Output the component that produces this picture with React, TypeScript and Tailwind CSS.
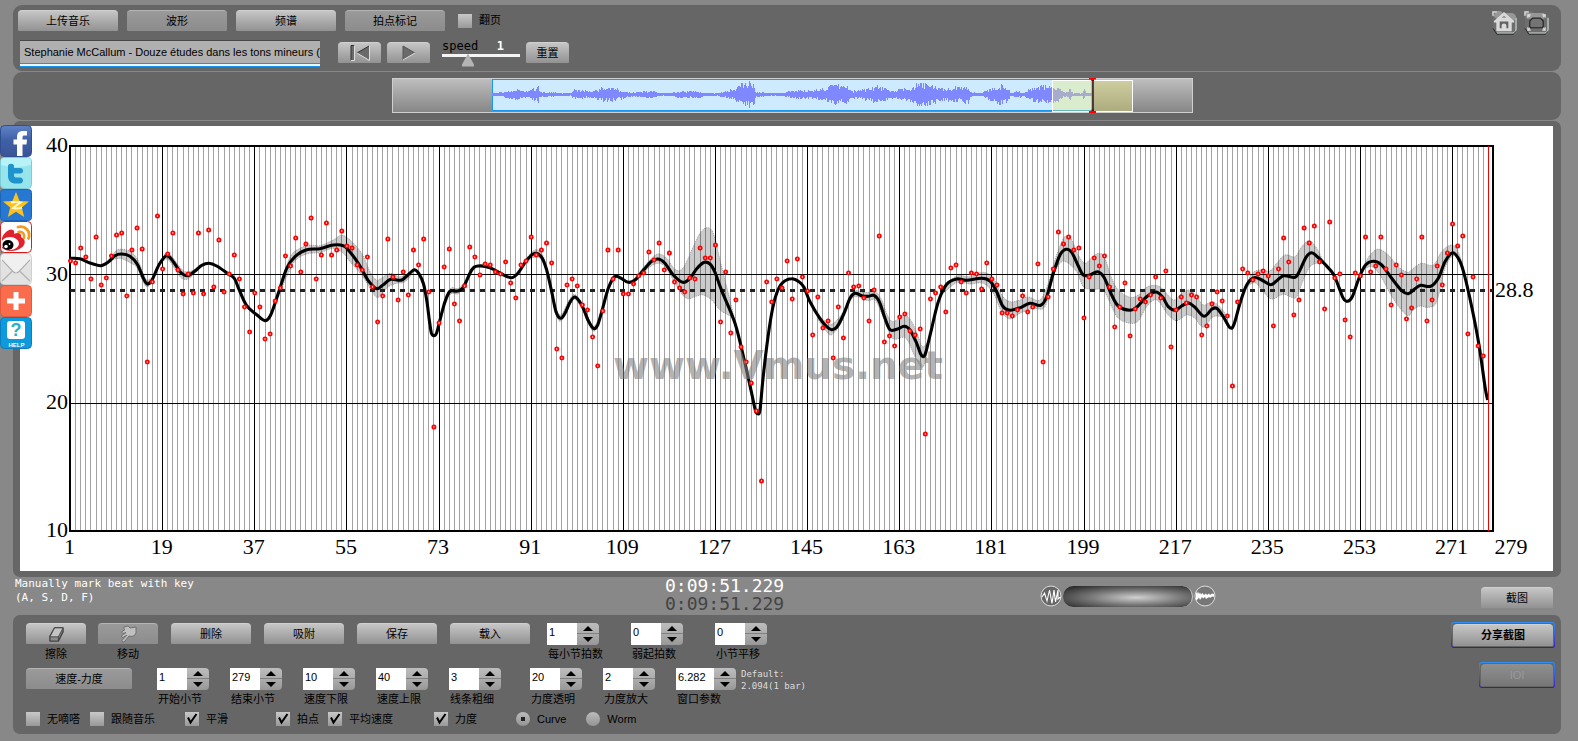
import React from "react";

type Point = [number, number];

/* ---------- chart data ---------- */

const LEFT = 50;
const RIGHT = 1473;
const TOP = 20;
const BOTTOM = 405;
const BEATS = 279;
const beatX = (beat: number) => LEFT + 0.5 + ((beat - 1) * (RIGHT - LEFT)) / (BEATS - 1);

const BEAT_LEVELS: number[] = [
  261, 263, 248, 257, 279, 237, 285, 278, 256, 235, 233, 296, 250, 228, 249, 362, 282, 216, 269, 254,
  233, 270, 294, 274, 293, 233, 294, 230, 287, 240, 292, 274, 255, 279, 307, 332, 293, 307, 339, 334,
  301, 288, 256, 266, 238, 272, 244, 218, 279, 255, 223, 255, 250, 231, 246, 248, 265, 270, 257, 287,
  322, 296, 239, 277, 300, 272, 295, 250, 265, 239, 292, 427, 323, 267, 249, 304, 321, 286, 247, 257,
  275, 264, 265, 272, 274, 262, 283, 298, 265, 261, 237, 255, 250, 243, 263, 349, 358, 285, 279, 286,
  305, 310, 337, 366, 311, 250, 279, 250, 294, 294, 284, 276, 273, 252, 260, 243, 270, 253, 282, 288,
  292, 278, 279, 248, 258, 258, 245, 322, 272, 333, 300, 347, 362, 383, 411, 481, 282, 302, 279, 288,
  261, 299, 259, 277, 291, 335, 297, 328, 321, 358, 307, 338, 273, 287, 286, 298, 321, 290, 236, 342,
  336, 346, 317, 314, 331, 335, 329, 434, 299, 293, 287, 312, 268, 265, 282, 293, 273, 274, 289, 263,
  279, 285, 313, 313, 316, 310, 296, 312, 307, 264, 362, 297, 269, 232, 244, 237, 250, 248, 318, 277,
  258, 266, 256, 287, 327, 307, 283, 336, 309, 299, 302, 295, 277, 298, 271, 347, 310, 297, 303, 295,
  297, 335, 326, 304, 292, 301, 316, 386, 302, 269, 273, 280, 274, 271, 276, 326, 269, 238, 262, 315,
  300, 228, 243, 226, 262, 309, 222, 278, 274, 320, 337, 273, 276, 237, 272, 266, 237, 269, 305, 265,
  275, 319, 308, 279, 237, 321, 300, 266, 285, 253, 224, 246, 236, 334, 277, 346, 356,
];

const section = (ox: number, oy: number, points: Point[]): Point[] =>
  points.map(([x, y]) => [ox + x / 3, oy + y / 3]);

const CURVE: Point[] = [
  ...section(-20, -16, [
    [210, 445], [240, 446], [270, 459], [302, 467], [325, 456], [345, 437], [365, 432], [390, 439], [412, 463],
    [428, 500], [441, 521], [455, 512], [478, 463], [500, 437], [520, 455], [540, 485], [562, 497], [585, 483],
    [605, 466], [627, 460], [650, 468], [680, 488], [703, 505], [717, 538], [740, 587], [770, 614], [795, 632],
    [812, 615], [835, 550], [860, 475], [885, 440], [920, 419], [960, 416], [1000, 405], [1030, 407], [1045, 420],
    [1075, 460], [1105, 512], [1130, 536], [1150, 524], [1172, 508], [1205, 510], [1230, 489],
  ]),
  ...section(380, 74, [
    [44, 209], [58, 223], [70, 250], [80, 300], [88, 360], [94, 398], [102, 407], [110, 398], [120, 360],
    [135, 305], [150, 274], [172, 273], [190, 262], [215, 210], [235, 198], [270, 203], [305, 222], [335, 233],
    [355, 218], [380, 181], [405, 160], [425, 172], [440, 210], [455, 275], [468, 335], [482, 355], [495, 340],
    [510, 307], [525, 291], [545, 315], [565, 362], [580, 385], [593, 375], [608, 325], [625, 265], [643, 231],
    [660, 233], [685, 247], [705, 240], [730, 211], [755, 184], [775, 177], [795, 190], [820, 225], [848, 247],
    [870, 235], [890, 206], [913, 187], [930, 192], [945, 217], [965, 272], [1005, 370], [1035, 490], [1055, 580],
    [1066, 630], [1073, 641], [1080, 630], [1088, 545], [1100, 440], [1115, 340], [1130, 280], [1148, 248],
    [1175, 236], [1197, 245], [1212, 262],
  ]),
  ...section(780, 74, [
    [30, 305], [60, 356], [80, 380], [95, 389], [110, 382], [130, 345], [150, 295], [165, 280], [185, 287],
    [205, 289], [222, 286], [238, 305], [255, 355], [270, 389], [290, 388], [313, 379], [330, 390], [350, 430],
    [362, 462], [370, 470], [378, 455], [395, 385], [415, 305], [440, 253], [470, 237], [500, 241], [545, 235],
    [570, 243], [590, 275], [608, 318], [630, 331], [660, 323], [690, 310], [722, 316], [740, 290], [760, 220],
    [780, 165], [798, 148], [815, 157], [835, 198], [850, 225], [870, 225], [893, 215], [912, 232], [935, 285],
    [955, 318], [990, 331], [1012, 320], [1040, 290], [1068, 276], [1088, 292], [1105, 320], [1125, 331],
    [1145, 318], [1165, 309], [1185, 322], [1212, 349], [1235, 328],
  ]),
  ...section(1160, 74, [
    [110, 325], [130, 350], [150, 383], [162, 373], [180, 310], [200, 255], [222, 233], [245, 240], [272, 254],
    [290, 242], [312, 227], [345, 232], [360, 210], [378, 172], [395, 158], [412, 170], [435, 193], [460, 222],
    [478, 265], [490, 295], [502, 304], [517, 290], [535, 240], [555, 197], [580, 184], [605, 195], [635, 235],
    [665, 272], [685, 281], [703, 268], [722, 256], [752, 259], [775, 235], [795, 185], [818, 158], [838, 180],
    [852, 220], [875, 320], [897, 435], [915, 560], [923, 600],
  ]),
];

/* Each band lists its upper edge left to right, then its lower edge left to right. */
const BANDS: [Point[], Point[]][] = [
  [
    section(-20, -16, [[325, 456], [345, 425], [362, 418], [390, 424], [412, 447], [430, 490], [441, 510], [460, 500]]),
    section(-20, -16, [[325, 458], [345, 447], [365, 446], [390, 458], [410, 472], [428, 512], [441, 530], [460, 512]]),
  ],
  [
    section(-20, -16, [[480, 455], [500, 428], [520, 445], [545, 478], [562, 486], [585, 478], [600, 468]]),
    section(-20, -16, [[480, 462], [500, 447], [515, 462], [540, 500], [562, 508], [585, 490], [600, 474]]),
  ],
  [
    section(-20, -16, [[835, 540], [870, 442], [900, 415], [930, 405], [960, 407], [1000, 390], [1025, 376], [1050, 390], [1085, 430], [1110, 485], [1130, 510], [1150, 500], [1172, 490], [1205, 500], [1245, 475]]),
    section(-20, -16, [[835, 560], [880, 460], [920, 432], [960, 428], [1000, 415], [1030, 430], [1050, 455], [1085, 495], [1110, 535], [1130, 562], [1145, 552], [1165, 530], [1190, 520], [1215, 515], [1245, 482]]),
  ],
  [
    section(380, 74, [[130, 310], [152, 265], [175, 265], [200, 240]]),
    section(380, 74, [[130, 325], [152, 282], [175, 281], [200, 250]]),
  ],
  [
    section(380, 74, [[380, 175], [392, 160], [408, 149], [425, 160], [442, 205]]),
    section(380, 74, [[380, 185], [392, 178], [408, 170], [425, 180], [442, 222]]),
  ],
  [
    section(380, 74, [[465, 315], [482, 345], [510, 296], [525, 284], [545, 308], [580, 378], [605, 330]]),
    section(380, 74, [[465, 335], [482, 364], [510, 315], [525, 298], [545, 325], [580, 394], [605, 345]]),
  ],
  [
    section(380, 74, [[700, 240], [745, 185], [773, 162], [800, 175], [820, 203], [837, 212], [855, 195], [880, 140], [900, 100], [920, 83], [940, 100], [960, 180], [985, 280], [1002, 352]]),
    section(380, 74, [[700, 250], [745, 205], [773, 190], [795, 200], [820, 240], [845, 282], [865, 296], [890, 288], [910, 285], [935, 300], [960, 330], [985, 345], [995, 352], [1002, 360]]),
  ],
  [
    section(780, 74, [[55, 345], [80, 368], [95, 373], [120, 350], [135, 325]]),
    section(780, 74, [[55, 360], [80, 395], [95, 404], [120, 375], [135, 340]]),
  ],
  [
    section(780, 74, [[150, 285], [165, 272], [185, 276], [205, 277], [225, 273], [245, 300], [262, 345], [280, 365], [312, 345], [335, 365], [355, 410], [367, 440], [380, 430]]),
    section(780, 74, [[150, 300], [165, 290], [185, 294], [205, 302], [225, 300], [245, 340], [262, 385], [280, 417], [310, 412], [325, 425], [345, 470], [367, 502], [380, 470]]),
  ],
  [
    section(780, 74, [[430, 260], [470, 228], [510, 230], [550, 217], [580, 235], [605, 285], [630, 305], [660, 300], [685, 291], [720, 300], [745, 250], [765, 180], [785, 125], [798, 108], [815, 120], [835, 165], [855, 190], [880, 168], [900, 160], [915, 175], [935, 235], [955, 270], [990, 292], [1015, 285], [1040, 262], [1065, 256], [1085, 265], [1110, 292], [1125, 300], [1145, 280], [1165, 270], [1185, 282], [1210, 315], [1240, 305], [1275, 338]]),
    section(780, 74, [[430, 280], [470, 248], [510, 252], [550, 250], [580, 280], [605, 335], [630, 357], [660, 340], [700, 325], [735, 320], [760, 230], [780, 190], [800, 187], [830, 215], [850, 260], [880, 268], [910, 270], [935, 320], [955, 355], [990, 370], [1015, 362], [1040, 320], [1070, 300], [1105, 345], [1130, 362], [1160, 345], [1185, 355], [1210, 382], [1240, 350], [1275, 352]]),
  ],
  [
    section(1160, 74, [[200, 250], [215, 222], [235, 210], [270, 212], [290, 190], [315, 165], [345, 170], [365, 140], [388, 122], [410, 145], [430, 185]]),
    section(1160, 74, [[200, 262], [225, 248], [250, 275], [275, 297], [310, 283], [335, 292], [350, 290], [370, 240], [390, 200], [415, 188], [430, 192]]),
  ],
  [
    section(1160, 74, [[540, 225], [560, 180], [580, 155], [598, 148], [625, 165], [655, 200], [683, 217], [700, 205], [725, 190], [760, 195], [785, 155], [815, 135], [835, 155], [852, 215]]),
    section(1160, 74, [[540, 235], [550, 212], [575, 200], [600, 225], [630, 280], [660, 325], [685, 347], [700, 330], [720, 318], [745, 322], [770, 305], [795, 205], [818, 168], [835, 182], [852, 225]]),
  ],
];

function smooth(points: Point[]): string {
  let d = "";
  for (let i = 0; i < points.length - 1; i++) {
    const p0 = points[i - 1] ?? points[i];
    const p1 = points[i];
    const p2 = points[i + 1];
    const p3 = points[i + 2] ?? p2;
    const c = [
      p1[0] + (p2[0] - p0[0]) / 6,
      p1[1] + (p2[1] - p0[1]) / 6,
      p2[0] - (p3[0] - p1[0]) / 6,
      p2[1] - (p3[1] - p1[1]) / 6,
      p2[0],
      p2[1],
    ].map((n) => n.toFixed(1));
    d += `C${c.join(" ")}`;
  }
  return d;
}

const curvePath = `M${CURVE[0].join(" ")}${smooth(CURVE)}`;
const bandPath = ([upper, lower]: [Point[], Point[]]) => {
  const back = [...lower].reverse();
  return `M${upper[0].join(" ")}${smooth(upper)}L${back[0].join(" ")}${smooth(back)}Z`;
};

const MAJOR_BEATS = [1, 19, 37, 55, 73, 91, 109, 127, 145, 163, 181, 199, 217, 235, 253, 271];

function TempoChart() {
  return (
    <svg viewBox="0 0 1533 445" className="block w-full bg-white" role="img" aria-label="Tempo curve">
      <g stroke="#a2a2a2" shapeRendering="crispEdges">
        {Array.from({ length: BEATS - 2 }, (_, i) => (
          <line key={i} x1={beatX(i + 1)} x2={beatX(i + 1)} y1={TOP} y2={BOTTOM} />
        ))}
      </g>
      <g fill="#000" fillOpacity="0.2" stroke="#777" strokeOpacity="0.7" strokeDasharray="1 1">
        {BANDS.map((band, i) => (
          <path key={i} d={bandPath(band)} />
        ))}
      </g>
      <g stroke="#000" shapeRendering="crispEdges">
        {MAJOR_BEATS.map((beat) => (
          <line key={beat} x1={beatX(beat)} x2={beatX(beat)} y1={TOP} y2={BOTTOM} />
        ))}
        <line x1={LEFT} x2={RIGHT} y1="148.5" y2="148.5" />
        <line x1={LEFT} x2={RIGHT} y1="277.5" y2="277.5" />
        <rect x={LEFT} y={TOP} width={RIGHT - LEFT} height={BOTTOM - TOP} fill="none" strokeWidth="2" />
      </g>
      <line x1={LEFT} x2={RIGHT} y1="164.5" y2="164.5" stroke="#222" strokeWidth="3" strokeDasharray="5 5" />
      <path d={curvePath} fill="none" stroke="#000" strokeWidth="3.1" strokeLinejoin="round" />
      <g fill="#fff" stroke="#f00" strokeWidth="1.8">
        {BEAT_LEVELS.map((y, i) => (
          <circle key={i} cx={beatX(i + 1)} cy={y - 126} r="1.6" />
        ))}
      </g>
      <line x1="1468.5" x2="1468.5" y1={TOP} y2={BOTTOM} stroke="#f00" shapeRendering="crispEdges" />
      <text x="758" y="253" textAnchor="middle" fill="#808080" fillOpacity="0.62" className="font-['DejaVu_Sans',sans-serif] text-[39px] font-bold">
        www.Vmus.net
      </text>
      <g className="font-['Liberation_Serif',serif] text-[22px]" fill="#000">
        <g textAnchor="end">
          <text x="48" y="26">40</text>
          <text x="48" y="155">30</text>
          <text x="48" y="283">20</text>
          <text x="48" y="411">10</text>
        </g>
        <g textAnchor="middle">
          {MAJOR_BEATS.map((beat) => (
            <text key={beat} x={beatX(beat) - 1} y="428">{beat}</text>
          ))}
          <text x="1491" y="428">279</text>
        </g>
        <text x="1475" y="171">28.8</text>
      </g>
    </svg>
  );
}

/* ---------- overview wave form ---------- */

const ENVELOPE: Point[] = [
  [0, 1], [12, 2], [19, 4], [26, 5], [33, 3], [38, 4], [46, 7], [48, 2], [55, 2], [68, 1], [78, 1], [83, 5],
  [94, 3], [99, 3], [105, 5], [113, 7], [121, 6], [129, 4], [136, 2], [147, 2], [152, 3], [161, 3], [166, 1],
  [179, 1], [184, 3], [195, 3], [205, 3], [216, 1], [227, 1], [232, 3], [242, 5], [248, 9], [253, 12], [258, 12],
  [262, 8], [264, 2], [280, 1], [290, 1], [298, 3], [311, 4], [319, 3], [327, 5], [338, 8], [348, 9], [355, 8],
  [359, 3], [367, 4], [375, 6], [385, 8], [391, 6], [399, 3], [407, 5], [417, 6], [425, 10], [433, 10], [444, 8],
  [449, 5], [457, 6], [465, 7], [476, 8], [478, 2], [489, 1], [497, 5], [507, 9], [516, 7], [518, 1], [526, 3],
  [531, 1], [536, 4], [544, 8], [555, 8], [565, 7], [572, 2], [576, 3], [578, 5], [581, 1], [589, 1], [592, 5],
  [594, 1], [600, 1],
];

function envelopeAt(x: number): number {
  const k = Math.max(1, ENVELOPE.findIndex(([px]) => px >= x));
  const [x0, y0] = ENVELOPE[k - 1];
  const [x1, y1] = ENVELOPE[k];
  return y0 + ((y1 - y0) * (x - x0)) / (x1 - x0);
}

/* Repeatable noise in 0..1 */
const noise = (n: number) => {
  const v = Math.sin(n * 12.9898 + 4.1) * 43758.5453;
  return v - Math.floor(v);
};

const wavePath = Array.from({ length: 600 }, (_, x) => {
  const top = envelopeAt(x) * (0.45 + 0.7 * noise(x));
  const low = envelopeAt(x) * (0.45 + 0.7 * noise(x + 1000));
  return `M${x + 100.5} ${Math.round(16 - top)}V${Math.round(17 + low)}`;
}).join("");

function Overview() {
  return (
    <svg viewBox="0 0 801 35" className="block h-[35px] w-[801px]" role="img" aria-label="Overview">
      <defs>
        <linearGradient id="track" x1="0" y1="0" x2="0" y2="1">
          <stop offset="0" stopColor="#bebebe" />
          <stop offset="1" stopColor="#868686" />
        </linearGradient>
      </defs>
      <rect x="0.5" y="0.5" width="800" height="34" fill="url(#track)" stroke="#cfcfcf" />
      <rect x="100.5" y="1.5" width="600" height="31" fill="#cdeaff" stroke="#1896f0" />
      <path d={wavePath} stroke="#8088ff" />
      <rect x="660.5" y="2.5" width="80" height="31" fill="#f0f070" fillOpacity="0.35" stroke="#fff" />
      <path d="M697 0.5H704M697 34H704M699 2H702M699 32.5H702" stroke="#f00" strokeWidth="2" />
      <path d="M699.5 2V33" stroke="#e66" strokeOpacity="0.5" />
      <path d="M701 2V33" stroke="#400" strokeWidth="1.4" />
    </svg>
  );
}

/* ---------- controls ---------- */

const SILVER =
  "flex h-[21px] items-center justify-center rounded-t-[4px] rounded-b-[1px] bg-linear-to-b from-[#c6c6c6] to-[#929292] border-t border-[#d0d0d0] text-[11px] leading-none text-black";
const PRESSED =
  "flex h-[21px] items-center justify-center rounded-t-[4px] rounded-b-[1px] bg-linear-to-b from-[#9a9a9a] to-[#8c8c8c] border-t border-[#b4b4b4] text-[11px] leading-none text-black";

function Check({ id, label, checked = false }: { id: string; label: string; checked?: boolean }) {
  return (
    <span className="flex items-center gap-[7px]">
      <span className="grid">
        <input
          id={id}
          type="checkbox"
          defaultChecked={checked}
          className="peer col-start-1 row-start-1 size-[14px] appearance-none bg-linear-to-b from-[#c8c8c8] to-[#999999]"
        />
        <svg viewBox="0 0 14 14" className="pointer-events-none invisible col-start-1 row-start-1 size-[14px] peer-checked:visible" aria-hidden="true">
          <path d="M3 5.5L5.500 10.500L11.500 2" fill="none" stroke="#000" strokeWidth="2" />
        </svg>
      </span>
      <label htmlFor={id}>{label}</label>
    </span>
  );
}

function Radio({ id, label, checked = false }: { id: string; label: string; checked?: boolean }) {
  return (
    <span className="flex items-center gap-[7px]">
      <span className="grid place-items-center">
        <input
          id={id}
          type="radio"
          name="view"
          defaultChecked={checked}
          className="peer col-start-1 row-start-1 size-[14px] appearance-none rounded-full bg-linear-to-b from-[#bcbcbc] to-[#949494]"
        />
        <span className="pointer-events-none invisible col-start-1 row-start-1 size-[4px] bg-[#222] peer-checked:visible" />
      </span>
      <label htmlFor={id}>{label}</label>
    </span>
  );
}

function Spinner({ id, label, value, wide = false }: { id: string; label: string; value: string; wide?: boolean }) {
  return (
    <div className="flex flex-col items-start">
      <div className="flex h-[22px]">
        <input
          id={id}
          defaultValue={value}
          className={`${wide ? "w-[38px]" : "w-[30px]"} h-[22px] bg-white px-[2px] pb-[5px] text-[11px] text-black outline-none`}
        />
        <span className="flex w-[22px] flex-col overflow-hidden rounded-r-[4px]">
          <button type="button" aria-label={`${label} +`} className="flex h-[11px] items-center justify-center border-b border-[#808080] bg-linear-to-b from-[#bdbdbd] to-[#adadad]">
            <svg viewBox="0 0 10 5" className="h-[5px] w-[10px] shrink-0"><path d="M0 5L5 0L10 5Z" /></svg>
          </button>
          <button type="button" aria-label={`${label} -`} className="flex h-[11px] items-center justify-center bg-linear-to-b from-[#acacac] to-[#989898]">
            <svg viewBox="0 0 10 5" className="h-[5px] w-[10px] shrink-0"><path d="M0 0L5 5L10 0Z" /></svg>
          </button>
        </span>
      </div>
      <label htmlFor={id} className="mt-[2px] pl-px text-[11px] leading-[14px] whitespace-nowrap">{label}</label>
    </div>
  );
}

/* ---------- share bar ---------- */

function ShareBar() {
  return (
    <nav aria-label="Share" className="absolute top-[125px] left-0 flex w-[32px] flex-col">
      <a href="#facebook" aria-label="Facebook">
        <svg viewBox="0 0 32 32" className="block size-[32px]">
          <defs>
            <linearGradient id="fb" x1="0" y1="0" x2="0" y2="1"><stop offset="0" stopColor="#5f83c6" /><stop offset="0.5" stopColor="#3f5fa5" /><stop offset="1" stopColor="#3a5596" /></linearGradient>
          </defs>
          <rect x="0.5" y="0.5" width="31" height="31" rx="4" fill="url(#fb)" stroke="#2f4f92" />
          <path d="M17 31V19.500H13.500V14.500H17V12C17 8 19 6 23 6H27V10.500H24.500C23 10.500 22.500 11 22.500 12.800V14.500H27L26.500 19.500H22.500V31Z" fill="#fff" />
        </svg>
      </a>
      <a href="#twitter" aria-label="Twitter">
        <svg viewBox="0 0 32 32" className="block size-[32px]">
          <rect x="0.5" y="0.5" width="31" height="31" rx="4" fill="#97e5ec" stroke="#7ccdd8" />
          <path d="M1 4Q1 1 4 1H28Q31 1 31 4V8Q16 12 1 8Z" fill="#b7f3f6" />
          <path d="M8 9C8 6 14 6 14 9V11H20C24 11 24 16.500 20 16.500H14V18C14 20 15 20.500 16.500 20.500H20C24 20.500 24 26.500 20 26.500H16C11 26.500 8 24 8 19Z" fill="#1f93cc" />
        </svg>
      </a>
      <a href="#qzone" aria-label="Qzone">
        <svg viewBox="0 0 32 32" className="block size-[32px]">
          <rect x="0.500" y="0.500" width="31" height="31" rx="3" fill="#2678d2" stroke="#1c64b8" />
          <path d="M16 3L19.600 12L29 12.600L21.800 18.600L24.200 28L16 22.800L7.800 28L10.200 18.600L3 12.600L12.400 12Z" fill="#ffc219" />
          <path d="M11 13.500C14 12.800 17 12.800 20.500 13.500L13 19C16 19.800 19 19.600 22 18.500" fill="none" stroke="#fff6c8" strokeWidth="2" />
        </svg>
      </a>
      <a href="#weibo" aria-label="Weibo">
        <svg viewBox="0 0 32 32" className="block size-[32px]">
          <rect x="0.500" y="0.500" width="31" height="31" rx="4" fill="#fff" stroke="#d01f1f" />
          <path d="M2 17C4 11 10 7 13 9C15 10.500 14 13 14 13C18 11 22 12 21 16C26 18 26 24 21 27C16 31 6 31 2 27Z" fill="#e0222e" />
          <ellipse cx="10" cy="22.500" rx="9" ry="6.500" fill="#fff" />
          <ellipse cx="8" cy="24" rx="5.500" ry="5" fill="#000" />
          <circle cx="6" cy="25.500" r="1.800" fill="#fff" />
          <circle cx="9.500" cy="23" r="0.900" fill="#fff" />
          <path d="M18.500 11C22.500 10 25 13 24 17" fill="none" stroke="#f59a1c" strokeWidth="2.500" strokeLinecap="round" />
          <path d="M18 6C25 4 31 10 28.500 17.500" fill="none" stroke="#f59a1c" strokeWidth="2.800" strokeLinecap="round" />
        </svg>
      </a>
      <a href="#mail" aria-label="Mail">
        <svg viewBox="0 0 32 32" className="block size-[32px]">
          <rect x="0.500" y="0.500" width="31" height="31" rx="4" fill="#f0f0f0" stroke="#cfcfcf" />
          <path d="M1 8L16 21L31 8V27Q31 31 27 31H5Q1 31 1 27Z" fill="#e2e2e2" />
          <path d="M2 7L13 18.500Q16 21.500 19 18.500L30 7M2 28L12.500 18M30 28L19.500 18" fill="none" stroke="#b0b0b0" strokeWidth="1.100" />
        </svg>
      </a>
      <a href="#more" aria-label="More">
        <svg viewBox="0 0 32 32" className="block size-[32px]">
          <rect x="0.500" y="0.500" width="31" height="31" rx="4" fill="#fa6c4c" stroke="#e2593b" />
          <path d="M16 7V25M7 16H25" stroke="#fff" strokeWidth="5" />
        </svg>
      </a>
      <a href="#help" aria-label="Help">
        <svg viewBox="0 0 32 32" className="block size-[32px]">
          <rect x="0.500" y="0.500" width="31" height="31" rx="4" fill="#0f9ade" stroke="#0a7dbd" />
          <rect x="7" y="4" width="18" height="18" rx="3" fill="#fff" />
          <text x="16" y="19" textAnchor="middle" fill="#23b3c6" className="font-['Liberation_Sans',sans-serif] text-[18px] font-bold">?</text>
          <text x="16.500" y="30" textAnchor="middle" fill="#fff" className="font-['Liberation_Sans',sans-serif] text-[6px] font-bold">HELP</text>
        </svg>
      </a>
    </nav>
  );
}

/* ---------- panels ---------- */

function TopPanel() {
  return (
    <header className="flex h-[66px] items-start justify-between rounded-[9px] bg-[#666] pt-[5px] pr-[12px] pl-[5px]">
      <div className="flex flex-col">
        <div className="flex items-center gap-[9px]">
          <button type="button" className={`${SILVER} w-[100px]`}>上传音乐</button>
          <button type="button" className={`${PRESSED} w-[100px]`}>波形</button>
          <button type="button" className={`${SILVER} w-[100px]`}>频谱</button>
          <button type="button" className={`${PRESSED} w-[100px]`}>拍点标记</button>
          <span className="ml-[4px] text-[11px]"><Check id="page" label="翻页" /></span>
        </div>
        <div className="mt-[9px] flex items-start pl-[2px]">
          <div className="h-[27px] w-[300px] border-t border-[#484848] bg-[#b0b0b0]">
            <input
              aria-label="Title"
              defaultValue="Stephanie McCallum - Douze études dans les tons mineurs ("
              className="block h-[22px] w-full pl-[4px] text-[11px] text-black outline-none"
            />
            <div className="h-[4px] border-y border-[#1893ee] bg-[#e8f6ff]" />
          </div>
          <button type="button" aria-label="Rewind" className={`${SILVER} mt-[2px] ml-[18px] w-[43px]`}>
            <svg viewBox="0 0 22 18" className="h-[18px] w-[22px]">
              <path d="M2 1.500H5V16.500H2ZM20 2V16L8 9Z" fill="#6a6a6a" />
              <path d="M2 16.500V1.500H5.500M8 9L20 2" fill="none" stroke="#333" />
              <path d="M5.500 1.500V16.500H2M8 9L20.500 16.500V2" fill="none" stroke="#ddd" />
            </svg>
          </button>
          <button type="button" aria-label="Play" className={`${SILVER} mt-[2px] ml-[6px] w-[43px]`}>
            <svg viewBox="0 0 14 18" className="h-[18px] w-[14px]">
              <path d="M1 2L13 9L1 16Z" fill="#6a6a6a" />
              <path d="M1 16V2L13 9" fill="none" stroke="#555" />
              <path d="M1 16L13 9" stroke="#ddd" />
            </svg>
          </button>
          <div className="ml-[12px] grid w-[78px] font-['DejaVu_Sans_Mono',monospace] text-[12px] leading-[14px]">
            <div className="-mt-px flex justify-between pr-[16px]">
              <label htmlFor="speed">speed</label>
              <output htmlFor="speed" className="font-bold text-white">1</output>
            </div>
            <input
              id="speed"
              type="range"
              min="0"
              max="3.3"
              step="0.5"
              defaultValue="1"
              className="h-[14px] w-full appearance-none bg-[linear-gradient(#f4f4f4,#f4f4f4)] bg-[length:100%_3px] bg-[position:0_1px] bg-no-repeat outline-none [&::-webkit-slider-thumb]:h-[13px] [&::-webkit-slider-thumb]:w-[12px] [&::-webkit-slider-thumb]:appearance-none [&::-webkit-slider-thumb]:bg-[#b4b4b4] [&::-webkit-slider-thumb]:[clip-path:polygon(50%_0,100%_85%,100%_100%,0_100%,0_85%)]"
            />
          </div>
          <button type="button" className={`${SILVER} mt-[2px] ml-[6px] w-[43px]`}>重置</button>
        </div>
      </div>
      <div className="flex gap-[7px]">
        <a href="#home" aria-label="Home">
          <svg viewBox="0 0 26 26" className="block size-[25px]">
            <path d="M5 1H9L11 3H21Q25 4 25 8V20Q25 24 21 24H6L1 19V6Z" fill="#6e6e6e" />
            <path d="M5 1H9L11 3H21Q25 4 25 8V10L20 12L5 9L1 6Z" fill="#979797" />
            <path d="M1 6V2H5" fill="none" stroke="#dcdcdc" strokeWidth="1.500" />
            <path d="M25 8V20Q25 24 21 24H5" fill="none" stroke="#b0b4b2" strokeWidth="1.800" />
            <path d="M1 19L5 25.200H22L25.500 22" fill="none" stroke="#222c28" />
            <path d="M12.500 2L23 11.500V13H20.500V22H4.500V13H2V11.500Z" fill="#dadada" />
            <path d="M8 12H17V19H15V16Q15 14 12.500 14Q10 14 10 16V19H8Z" fill="#626262" />
            <path d="M10 8L12.500 6L15 8Z" fill="#888" />
          </svg>
        </a>
        <a href="#fullscreen" aria-label="Full screen">
          <svg viewBox="0 0 26 26" className="block size-[25px]">
            <path d="M5 1H9L11 3H21Q25 4 25 8V20Q25 24 21 24H6L1 19V6Z" fill="#6e6e6e" />
            <path d="M1 3H17L21 3V9H3Z" fill="#979797" />
            <path d="M1 6V2H5" fill="none" stroke="#dcdcdc" strokeWidth="1.500" />
            <path d="M25 8V20Q25 24 21 24H5" fill="none" stroke="#b0b4b2" strokeWidth="1.800" />
            <path d="M1 19L5 25.200H22L25.500 22" fill="none" stroke="#222c28" />
            <path d="M9 8.500H17L20 11.500V17L18.500 18.500H7L6 17V11.500Z" fill="#747474" stroke="#222" strokeWidth="1.200" />
            <path d="M4 8V5H7M4 5L6 7M19 5H22V8M22 5L20 7M4 18V21H7M4 21L6 19M19 21H22V18M22 21L20 19" fill="none" stroke="#e0e0e0" strokeWidth="1.200" />
          </svg>
        </a>
      </div>
    </header>
  );
}

function StatusStrip() {
  return (
    <div className="flex h-[38px] items-start pr-[8px] pl-[2px]">
      <p className="w-[650px] font-['DejaVu_Sans_Mono',monospace] text-[11px] leading-[14px] text-white">
        Manually mark beat with key
        <br />
        (A, S, D, F)
      </p>
      <div className="w-[375px] font-['DejaVu_Sans_Mono',monospace] text-[18px] leading-[18px]">
        <div className="text-white">0:09:51.229</div>
        <div className="text-[#444]">0:09:51.229</div>
      </div>
      <div className="mt-[8px] flex items-center">
        <svg viewBox="0 0 22 22" className="size-[22px]" aria-hidden="true">
          <circle cx="11" cy="11" r="10" fill="#666" stroke="#ddd" />
          <path d="M2 12L4.500 8L7 16L9.500 5L12 18.500L14 5L15.500 17L18 5V14L20.500 12" fill="none" stroke="#fff" strokeWidth="1.100" />
        </svg>
        <input
          type="range"
          aria-label="Volume"
          className="mx-px h-[21px] w-[130px] appearance-none rounded-full border-r border-[#ccc] bg-[radial-gradient(ellipse_at_57%_55%,#d0d0d0,#777_45%,#222_95%)] [&::-webkit-slider-thumb]:opacity-0"
        />
        <svg viewBox="0 0 22 22" className="size-[22px]" aria-hidden="true">
          <circle cx="11" cy="11" r="10" fill="#777" stroke="#ddd" />
          <path d="M2 6L3 9L4 6.500L5 9L6 7.500L7 9.500L8.500 8L10 10L12 8.500L13 10L15 8.500L16 10L18 8.500L20 9V12L18 11.500L16 13L15 12L12 14L11 12L9 13.500L8 12L6 15L5 12.500L4 14L2 15.500Z" fill="#fff" />
        </svg>
      </div>
      <button type="button" className={`${SILVER} mt-[10px] ml-auto w-[72px]`}>截图</button>
    </div>
  );
}

function ControlPanel() {
  return (
    <section className="flex h-[119px] justify-between rounded-[7px] bg-[#666] pr-[6px] pl-[13px] text-[11px]">
      <div className="flex flex-col pt-[8px]">
        <div className="flex h-[45px] items-start">
          <div className="flex gap-[12px]">
            <div className="flex flex-col items-center">
              <button type="button" aria-labelledby="erase" className={`${SILVER} w-[60px]`}>
                <svg viewBox="0 0 18 18" className="size-[17px]">
                  <path d="M7 2H16V6L11 16H2V11Z" fill="#8c8c8c" stroke="#444" strokeWidth="1.400" strokeLinejoin="round" />
                  <path d="M7 2H16L11 11.500H2Z" fill="#c4c4c4" stroke="#444" strokeLinejoin="round" />
                  <path d="M11 11.500V16" stroke="#444" />
                </svg>
              </button>
              <span id="erase" className="mt-[3px] leading-[14px]">擦除</span>
            </div>
            <div className="flex flex-col items-center">
              <button type="button" aria-labelledby="move" className={`${PRESSED} w-[60px]`}>
                <svg viewBox="0 0 18 18" className="size-[18px]">
                  <path d="M5 2L9 1L11 3L17 2V8Q16 11 13 11.500L10 11L5 17Q3 17.500 3 15.500L8 10L4 12.500Q2 12.500 2.500 11L7 7.500L4 8.500Q2 8 3 6.500L6 4.500Q4 4 5 2Z" fill="#c0c0c0" stroke="#6a6a6a" strokeWidth="0.900" strokeLinejoin="round" />
                </svg>
              </button>
              <span id="move" className="mt-[3px] leading-[14px]">移动</span>
            </div>
          </div>
          <div className="ml-[13px] flex gap-[13px]">
            <button type="button" className={`${SILVER} w-[80px]`}>删除</button>
            <button type="button" className={`${SILVER} w-[80px]`}>吸附</button>
            <button type="button" className={`${SILVER} w-[80px]`}>保存</button>
            <button type="button" className={`${SILVER} w-[80px]`}>载入</button>
          </div>
          <div className="ml-[17px] grid grid-cols-[repeat(3,84px)]">
            <Spinner id="beats" label="每小节拍数" value="1" />
            <Spinner id="pickup" label="弱起拍数" value="0" />
            <Spinner id="shift" label="小节平移" value="0" />
          </div>
        </div>
        <div className="flex h-[43px] items-start">
          <button type="button" className={`${PRESSED} w-[106px]`}>速度-力度</button>
          <div className="ml-[25px] grid grid-cols-[repeat(5,73px)]">
            <Spinner id="start" label="开始小节" value="1" />
            <Spinner id="end" label="结束小节" value="279" />
            <Spinner id="min" label="速度下限" value="10" />
            <Spinner id="max" label="速度上限" value="40" />
            <Spinner id="stroke" label="线条粗细" value="3" />
          </div>
          <div className="ml-[8px] grid grid-cols-[repeat(2,73px)_65px]">
            <Spinner id="alpha" label="力度透明" value="20" />
            <Spinner id="gain" label="力度放大" value="2" />
            <Spinner id="window" label="窗口参数" value="6.282" wide />
          </div>
          <p className="font-['DejaVu_Sans_Mono',monospace] text-[9px] leading-[12px] text-[#ddd]">
            Default:
            <br />
            2.094(1 bar)
          </p>
        </div>
        <div className="flex h-[16px] items-center">
          <div className="flex gap-[10px]">
            <Check id="mute" label="无嘀嗒" />
            <Check id="follow" label="跟随音乐" />
          </div>
          <div className="ml-[30px] flex gap-[48px]">
            <Check id="smooth" label="平滑" checked />
            <span className="flex gap-[9px]">
              <Check id="dots" label="拍点" checked />
              <Check id="average" label="平均速度" checked />
            </span>
          </div>
          <div className="ml-[41px] flex gap-[39px]">
            <Check id="dynamics" label="力度" checked />
            <span className="flex gap-[20px]">
              <Radio id="curve" label="Curve" checked />
              <Radio id="worm" label="Worm" />
            </span>
          </div>
        </div>
      </div>
      <div className="flex flex-col items-end gap-[14px] pt-[7px]">
        <div className="rounded-[3px] bg-linear-to-b from-[#2e90f4] to-[#3a10c8] p-px">
          <div className="rounded-[2px] bg-[#666] p-px">
            <button type="button" className={`${SILVER} h-[22px] w-[100px] font-bold`}>分享截图</button>
          </div>
        </div>
        <div className="rounded-[3px] bg-linear-to-b from-[#2e90f4] to-[#3a10c8] p-px">
          <div className="rounded-[2px] bg-[#666] p-px">
            <button type="button" disabled className="flex h-[22px] w-[72px] items-center justify-center rounded-t-[4px] bg-linear-to-b from-[#8f8f8f] to-[#777] text-[11px] text-[#999]">IOI</button>
          </div>
        </div>
      </div>
    </section>
  );
}

export default function App() {
  return (
    <main className="relative min-h-screen bg-[#888] pt-[5px] pr-[17px] pb-[7px] pl-[13px] font-['Liberation_Sans','Noto_Sans_CJK_SC',sans-serif] text-black">
      <TopPanel />
      <section className="mt-px flex h-[48px] items-start justify-center rounded-[9px] bg-[#666] pt-[6px] pl-[11px]">
        <Overview />
      </section>
      <section className="mt-px rounded-[7px] bg-[#666] pt-[5px] pr-[8px] pb-[6px] pl-[7px]">
        <TempoChart />
      </section>
      <StatusStrip />
      <ControlPanel />
      <ShareBar />
    </main>
  );
}
